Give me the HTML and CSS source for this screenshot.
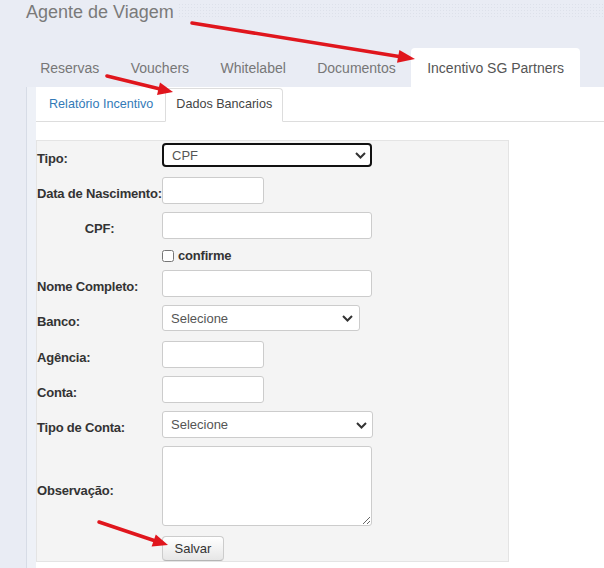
FILE: index.html
```html
<!DOCTYPE html>
<html lang="pt-BR">
<head>
    <meta charset="UTF-8">
    <meta name="viewport" content="width=device-width, initial-scale=1.0">
    <title>Agente de Viagem</title>
    <link rel="stylesheet" href="styles.css">
</head>
<body>

    <header class="page-header">
        <h1>Agente de Viagem</h1>
        <span class="header-dots"></span>
    </header>

    <nav class="main-tabs">
        <a href="#" class="tab">Reservas</a>
        <a href="#" class="tab">Vouchers</a>
        <a href="#" class="tab">Whitelabel</a>
        <a href="#" class="tab">Documentos</a>
        <a href="#" class="tab active">Incentivo SG Partners</a>
    </nav>

    <div class="panel">
        <div class="panel-body">
            <nav class="sub-tabs">
                <a href="#" class="sub-tab">Relatório Incentivo</a>
                <a href="#" class="sub-tab active">Dados Bancarios</a>
            </nav>

            <form class="bank-form">
                <div class="row gap-lg">
                    <label class="field-label">Tipo:</label>
                    <div class="select-wrap wide">
                        <select class="select focused">
                            <option>CPF</option>
                        </select>
                        <svg class="chevron" width="11" height="7" viewBox="0 0 11 7"><path d="M1 1l4.5 4.5L10 1" fill="none" stroke="#333" stroke-width="2"/></svg>
                    </div>
                </div>
                <div class="row">
                    <label class="field-label">Data de Nascimento:</label>
                    <input type="text" class="input short">
                </div>
                <div class="row">
                    <label class="field-label center">CPF:</label>
                    <input type="text" class="input long">
                </div>
                <div class="row check-row">
                    <span class="field-label"></span>
                    <label class="check"><input type="checkbox"> confirme</label>
                </div>
                <div class="row">
                    <label class="field-label">Nome Completo:</label>
                    <input type="text" class="input long">
                </div>
                <div class="row gap-lg">
                    <label class="field-label">Banco:</label>
                    <div class="select-wrap bank">
                        <select class="select">
                            <option>Selecione</option>
                        </select>
                        <svg class="chevron" width="11" height="7" viewBox="0 0 11 7"><path d="M1 1l4.5 4.5L10 1" fill="none" stroke="#333" stroke-width="2"/></svg>
                    </div>
                </div>
                <div class="row">
                    <label class="field-label">Agência:</label>
                    <input type="text" class="input short">
                </div>
                <div class="row">
                    <label class="field-label">Conta:</label>
                    <input type="text" class="input short">
                </div>
                <div class="row">
                    <label class="field-label">Tipo de Conta:</label>
                    <div class="select-wrap account">
                        <select class="select">
                            <option>Selecione</option>
                        </select>
                        <svg class="chevron" width="11" height="7" viewBox="0 0 11 7"><path d="M1 1l4.5 4.5L10 1" fill="none" stroke="#333" stroke-width="2"/></svg>
                    </div>
                </div>
                <div class="row gap-lg">
                    <label class="field-label note-label">Observação:</label>
                    <textarea class="textarea"></textarea>
                </div>
                <div class="row last">
                    <span class="field-label"></span>
                    <button type="button" class="save">Salvar</button>
                </div>
            </form>
        </div>
    </div>

    <!-- red arrows drawn on top of the screenshot -->
    <svg class="arrows" width="604" height="568" viewBox="0 0 604 568">
        <g fill="#e0161d" stroke="#e0161d" stroke-width="3.5" stroke-linecap="round">
            <line x1="192" y1="23" x2="399" y2="56.5"/>
            <polygon stroke="none" points="415,59 397,62.8 399.4,50"/>
            <line x1="107" y1="76" x2="159" y2="88.8"/>
            <polygon stroke="none" points="173,92 157,95 160,82.5"/>
            <line x1="99" y1="522" x2="154" y2="540.5"/>
            <polygon stroke="none" points="168,545 151.6,546.5 155.8,534.5"/>
        </g>
    </svg>

</body>
</html>
```

FILE: styles.css
```css
body {
    font-family: 'Liberation Sans', Arial, sans-serif;
    margin: 0;
    padding: 0;
    background-color: #e9ecf4;
    position: relative;
    height: 568px;
    overflow: hidden;
}

.page-header {
    display: flex;
    align-items: flex-start;
    padding: 2px 0 0 26px;
    height: 26px;
}

.page-header h1 {
    margin: 0;
    font-size: 18px;
    font-weight: normal;
    line-height: 20px;
    color: #7a7a7a;
}

.header-dots {
    flex: 1;
    height: 14px;
    margin: 1px 0 0 4px;
    background-image: radial-gradient(#dde1ea 1px, transparent 1px);
    background-size: 3px 3px;
}

.main-tabs {
    display: flex;
    margin: 20px 0 0 24.5px;
}

.tab {
    padding: 10px 15.7px 9px;
    line-height: 20px;
    font-size: 14px;
    color: #777;
    text-decoration: none;
    border-radius: 4px 4px 0 0;
}

.tab.active {
    background-color: #fff;
    color: #555;
}

.panel {
    margin-left: 26px;
    border-left: 1px solid #d7dce6;
    height: 481px;
}

.panel-body {
    border-left: 9px solid #eef1f7;
    background-color: #fff;
    height: 100%;
    padding-top: 1px;
    box-sizing: border-box;
}

.sub-tabs {
    display: flex;
    border-bottom: 1px solid #ddd;
}

.sub-tab {
    padding: 7px 12px 8px;
    line-height: 17px;
    font-size: 12.6px;
    color: #337ab7;
    text-decoration: none;
    border: 1px solid transparent;
    border-radius: 4px 4px 0 0;
    margin-bottom: -1px;
}

.sub-tab:first-child {
    padding-right: 11px;
}

.sub-tab.active {
    color: #444;
    padding: 7px 10px 8px;
    border-color: #ddd #ddd #fff;
    background-color: #fff;
}

.bank-form {
    margin-top: 18px;
    width: 473px;
    box-sizing: border-box;
    background-color: #f4f4f4;
    border: 1px solid #e4e4e4;
    padding-top: 2px;
    height: 422px;
}

.row {
    display: flex;
    align-items: center;
    margin-bottom: 8px;
}

.row.gap-lg {
    margin-bottom: 10px;
}

.row.last {
    margin-bottom: 0;
}

.field-label {
    width: 125px;
    flex-shrink: 0;
    padding-top: 6px;
    font-size: 13px;
    font-weight: bold;
    letter-spacing: -0.2px;
    color: #333;
    white-space: nowrap;
}

.field-label.center {
    text-align: center;
}

.note-label {
    margin-top: 2px;
}

.input, .textarea, .select {
    font-family: 'Liberation Sans', Arial, sans-serif;
    font-size: 13px;
    color: #555;
    background-color: #fff;
    border: 1px solid #ccc;
    border-radius: 3px;
    box-sizing: border-box;
    margin: 0;
}

.input {
    height: 27px;
    padding: 0 8px;
}

.input.short {
    width: 102px;
}

.input.long {
    width: 210px;
}

.select-wrap {
    position: relative;
}

.select {
    appearance: none;
    width: 100%;
    height: 26px;
    padding: 0 8px;
}

.select.focused {
    height: 24px;
    border: 2px solid #111;
    border-radius: 4px;
    outline: none;
}

.select-wrap.wide {
    width: 210px;
}

.select-wrap.bank {
    width: 198px;
}

.select-wrap.account {
    width: 211px;
}

.select-wrap.account .select {
    height: 27px;
}

.chevron {
    position: absolute;
    right: 6px;
    top: 50%;
    margin-top: -3px;
}

.bank .chevron {
    right: 7px;
}

.check-row {
    height: 17px;
    margin-bottom: 6px;
}

.check-row .field-label {
    padding-top: 0;
}

.check {
    display: flex;
    align-items: center;
    gap: 4px;
    font-size: 13px;
    font-weight: bold;
    letter-spacing: -0.2px;
    color: #333;
}

.check input {
    margin: 0;
    width: 12px;
    height: 12px;
}

.textarea {
    width: 210px;
    height: 80px;
    resize: both;
}

.save {
    font-family: 'Liberation Sans', Arial, sans-serif;
    font-size: 13px;
    color: #333;
    width: 62px;
    height: 25px;
    padding: 0;
    border: 1px solid #ccc;
    border-bottom-color: #b5b5b5;
    border-radius: 4px;
    background: linear-gradient(#fff, #e6e6e6);
    cursor: pointer;
}

.arrows {
    position: absolute;
    top: 0;
    left: 0;
    pointer-events: none;
}
```
